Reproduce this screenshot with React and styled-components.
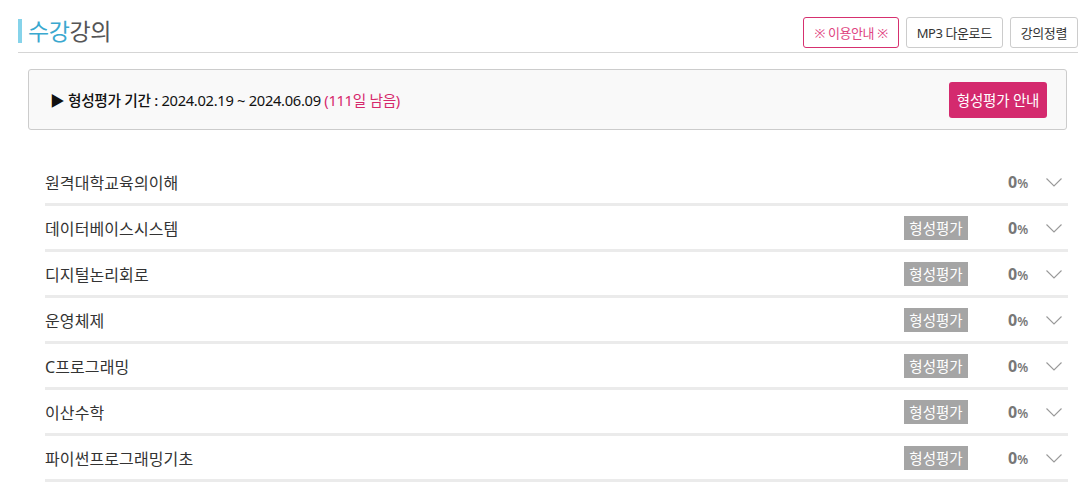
import React from 'react';
import styled, { createGlobalStyle } from 'styled-components';

const GlobalStyle = createGlobalStyle`
  body {
    margin: 0;
    background: #fff;
    font-family: "Noto Sans", "Noto Sans CJK KR", sans-serif;
    color: #333;
  }
`;

const Page = styled.div`
  padding: 0 5px 0 18px;
`;

const Header = styled.div`
  display: flex;
  align-items: flex-end;
  justify-content: space-between;
  height: 53px;
  border-bottom: 1px solid #d5d5d5;
  padding-bottom: 4px;
  box-sizing: border-box;
`;

const Title = styled.h2`
  margin: 0 0 5px;
  border-left: 4px solid #86d3ea;
  padding-left: 6px;
  height: 24px;
  line-height: 24px;
  font-size: 23px;
  font-weight: 400;
  color: #555;
  letter-spacing: -0.4px;
  span { color: #3aa8cf; }
`;

const Tools = styled.div`
  display: flex;
  gap: 7px;
`;

const ToolButton = styled.button`
  height: 31px;
  padding: 0 10px;
  background: #fff;
  border: 1px solid ${(p) => (p.accent ? '#d6306f' : '#ccc')};
  color: ${(p) => (p.accent ? '#e0457f' : '#333')};
  border-radius: 3px;
  font-family: inherit;
  font-size: 13px;
  letter-spacing: -0.4px;
`;

const PeriodBox = styled.div`
  display: flex;
  align-items: center;
  justify-content: space-between;
  margin: 16px 11px 0 10px;
  height: 61px;
  box-sizing: border-box;
  padding: 0 19px 0 21px;
  background: #f9f9f9;
  border: 1px solid #ccc;
  border-radius: 3px;
`;

const PeriodText = styled.p`
  margin: 0;
  font-size: 14.7px;
  color: #111;
  letter-spacing: -0.3px;
  b { font-weight: 500; }
  em { font-style: normal; color: #d6286c; }
`;

const GuideButton = styled.button`
  height: 36px;
  width: 98px;
  padding: 0;
  border: 0;
  border-radius: 3px;
  background: #d42a6e;
  color: #fff;
  font-family: inherit;
  font-size: 14.5px;
  letter-spacing: -0.2px;
`;

const List = styled.ul`
  list-style: none;
  margin: 30px 10px 0 27px;
  padding: 0;
`;

const Row = styled.li`
  display: flex;
  align-items: center;
  height: 43px;
  border-bottom: 3px solid #ebebeb;
  padding-right: 6px;
`;

const Name = styled.span`
  flex: 1;
  font-size: 16px;
  color: #333;
  letter-spacing: 0.1px;
`;

const Badge = styled.span`
  width: 64px;
  height: 24px;
  line-height: 24px;
  text-align: center;
  background: #a5a5a5;
  color: #fff;
  font-size: 14.5px;
`;

const Percent = styled.span`
  margin-left: 40px;
  width: 22px;
  color: #777;
  font-size: 16px;
  font-weight: 700;
  small { font-size: 12.5px; font-weight: 600; }
`;

const Chevron = styled.svg`
  margin-left: 16px;
  width: 16px;
  height: 9px;
  margin-top: 2px;
`;

const courses = [
  { name: '원격대학교육의이해', badge: false },
  { name: '데이터베이스시스템', badge: true },
  { name: '디지털논리회로', badge: true },
  { name: '운영체제', badge: true },
  { name: 'C프로그래밍', badge: true },
  { name: '이산수학', badge: true },
  { name: '파이썬프로그래밍기초', badge: true },
];

export default function App() {
  return (
    <Page>
      <GlobalStyle />
      <Header>
        <Title><span>수강</span>강의</Title>
        <Tools>
          <ToolButton accent>※ 이용안내 ※</ToolButton>
          <ToolButton>MP3 다운로드</ToolButton>
          <ToolButton>강의정렬</ToolButton>
        </Tools>
      </Header>
      <PeriodBox>
        <PeriodText>
          ▶ <b>형성평가 기간 :</b> 2024.02.19 ~ 2024.06.09 <em>(111일 남음)</em>
        </PeriodText>
        <GuideButton>형성평가 안내</GuideButton>
      </PeriodBox>
      <List>
        {courses.map((c) => (
          <Row key={c.name}>
            <Name>{c.name}</Name>
            {c.badge && <Badge>형성평가</Badge>}
            <Percent>0<small>%</small></Percent>
            <Chevron viewBox="0 0 16 9">
              <polyline points="0.5,0.5 8,8 15.5,0.5" fill="none" stroke="#999" strokeWidth="1.1" />
            </Chevron>
          </Row>
        ))}
      </List>
    </Page>
  );
}
